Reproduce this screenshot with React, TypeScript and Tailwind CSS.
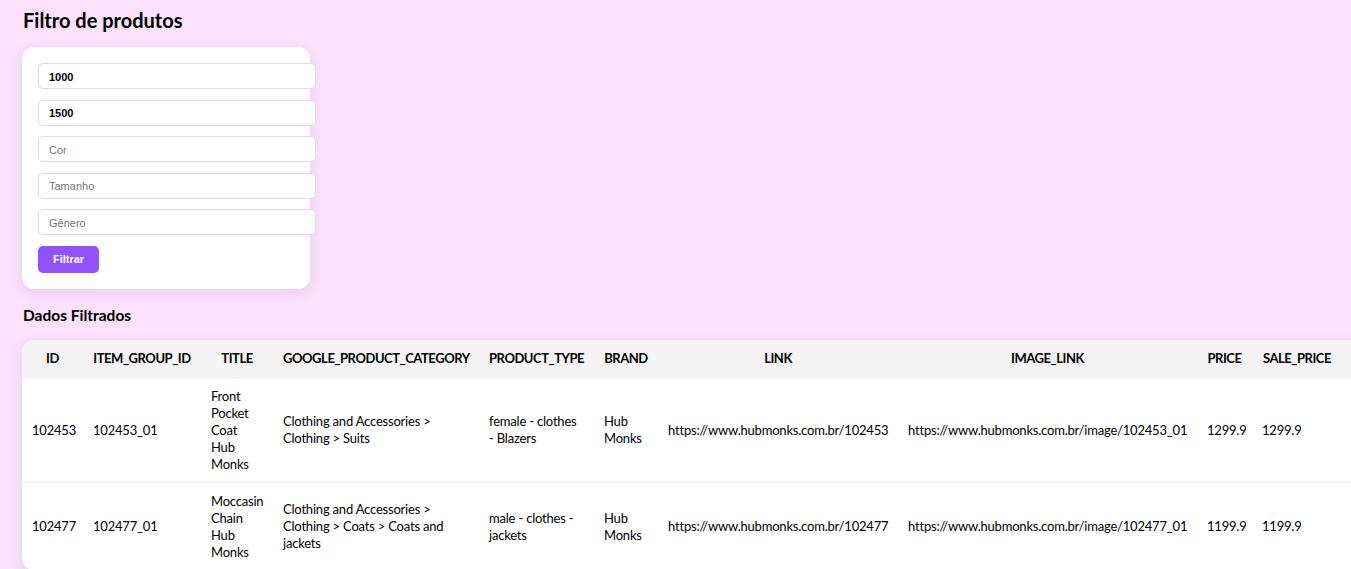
import React from "react";

const cols = [
  { key: "ID", w: "w-[61px]" },
  { key: "ITEM_GROUP_ID", w: "w-[118px]" },
  { key: "TITLE", w: "w-[72px]" },
  { key: "GOOGLE_PRODUCT_CATEGORY", w: "w-[206px]" },
  { key: "PRODUCT_TYPE", w: "w-[115px]" },
  { key: "BRAND", w: "w-[64px]" },
  { key: "LINK", w: "w-[240px]" },
  { key: "IMAGE_LINK", w: "w-[299px]" },
  { key: "PRICE", w: "w-[55px]" },
  { key: "SALE_PRICE", w: "w-[90px]" },
];

const rows = [
  {
    ID: "102453",
    ITEM_GROUP_ID: "102453_01",
    TITLE: "Front Pocket Coat Hub Monks",
    GOOGLE_PRODUCT_CATEGORY: "Clothing and Accessories > Clothing > Suits",
    PRODUCT_TYPE: "female - clothes - Blazers",
    BRAND: "Hub Monks",
    LINK: "https://www.hubmonks.com.br/102453",
    IMAGE_LINK: "https://www.hubmonks.com.br/image/102453_01",
    PRICE: "1299.9",
    SALE_PRICE: "1299.9",
  },
  {
    ID: "102477",
    ITEM_GROUP_ID: "102477_01",
    TITLE: "Moccasin Chain Hub Monks",
    GOOGLE_PRODUCT_CATEGORY: "Clothing and Accessories > Clothing > Coats > Coats and jackets",
    PRODUCT_TYPE: "male - clothes - jackets",
    BRAND: "Hub Monks",
    LINK: "https://www.hubmonks.com.br/102477",
    IMAGE_LINK: "https://www.hubmonks.com.br/image/102477_01",
    PRICE: "1199.9",
    SALE_PRICE: "1199.9",
  },
];

const font = { fontFamily: "Lato, 'Noto Sans', sans-serif" };

export default function App() {
  return (
    <div className="min-h-screen w-full overflow-hidden bg-[#fae1fc] text-black" style={font}>
      <div className="pl-[22px] pt-[8px]">
        <h1 className="text-[20px] font-bold leading-[25px] mb-[14px] pl-[1px]">Filtro de produtos</h1>
        <div className="w-[288px] rounded-[12px] bg-white p-[16px] shadow-[0_4px_12px_rgba(160,90,170,0.15)]">
          {[
            { v: "1000", p: "" },
            { v: "1500", p: "" },
            { v: "", p: "Cor" },
            { v: "", p: "Tamanho" },
            { v: "", p: "Gênero" },
          ].map((f, i) => (
            <input
              key={i}
              defaultValue={f.v}
              placeholder={f.p}
              className="box-content block w-full h-[23px] mb-[10.5px] px-[10px] pt-[1px] pb-0 rounded-[5px] border border-[#dddddd] bg-white text-[11px] font-bold text-black placeholder:font-normal placeholder:text-[#757575] outline-none"
              style={{ fontFamily: "'Liberation Sans', Arial, sans-serif" }}
            />
          ))}
          <button
            className="block h-[27px] w-[61px] rounded-[5px] bg-[#9152fd] text-[11px] font-bold text-white"
            style={{ fontFamily: "'Liberation Sans', Arial, sans-serif" }}
          >
            Filtrar
          </button>
        </div>
        <h2 className="mt-[16px] mb-[15px] text-[15.5px] font-bold leading-[20px] pl-[1px]">Dados Filtrados</h2>
        <div className="w-max overflow-hidden rounded-[12px] bg-white shadow-[0_4px_12px_rgba(160,90,170,0.15)]">
          <table className="w-[1350px] table-fixed border-collapse text-[13px] leading-[17px]">
            <thead>
              <tr className="bg-[#f4f4f4]">
                {cols.map((c) => (
                  <th
                    key={c.key}
                    className={`${c.w} px-[10px] py-[10px] text-center font-bold whitespace-nowrap tracking-[-0.45px]`}
                  >
                    {c.key}
                  </th>
                ))}
                <th className="w-[30px]"></th>
              </tr>
            </thead>
            <tbody>
              {rows.map((r, i) => (
                <tr key={i} className="border-t border-[#eeeeee]">
                  {cols.map((c) => (
                    <td
                      key={c.key}
                      className={`${c.w} px-[10px] pt-[10px] pb-[9px] text-left align-middle tracking-[-0.2px] ${
                        c.key === "LINK" || c.key === "IMAGE_LINK" ? "whitespace-nowrap" : ""
                      }`}
                    >
                      {(r as Record<string, string>)[c.key]}
                    </td>
                  ))}
                  <td className="w-[30px]"></td>
                </tr>
              ))}
            </tbody>
          </table>
        </div>
      </div>
    </div>
  );
}
